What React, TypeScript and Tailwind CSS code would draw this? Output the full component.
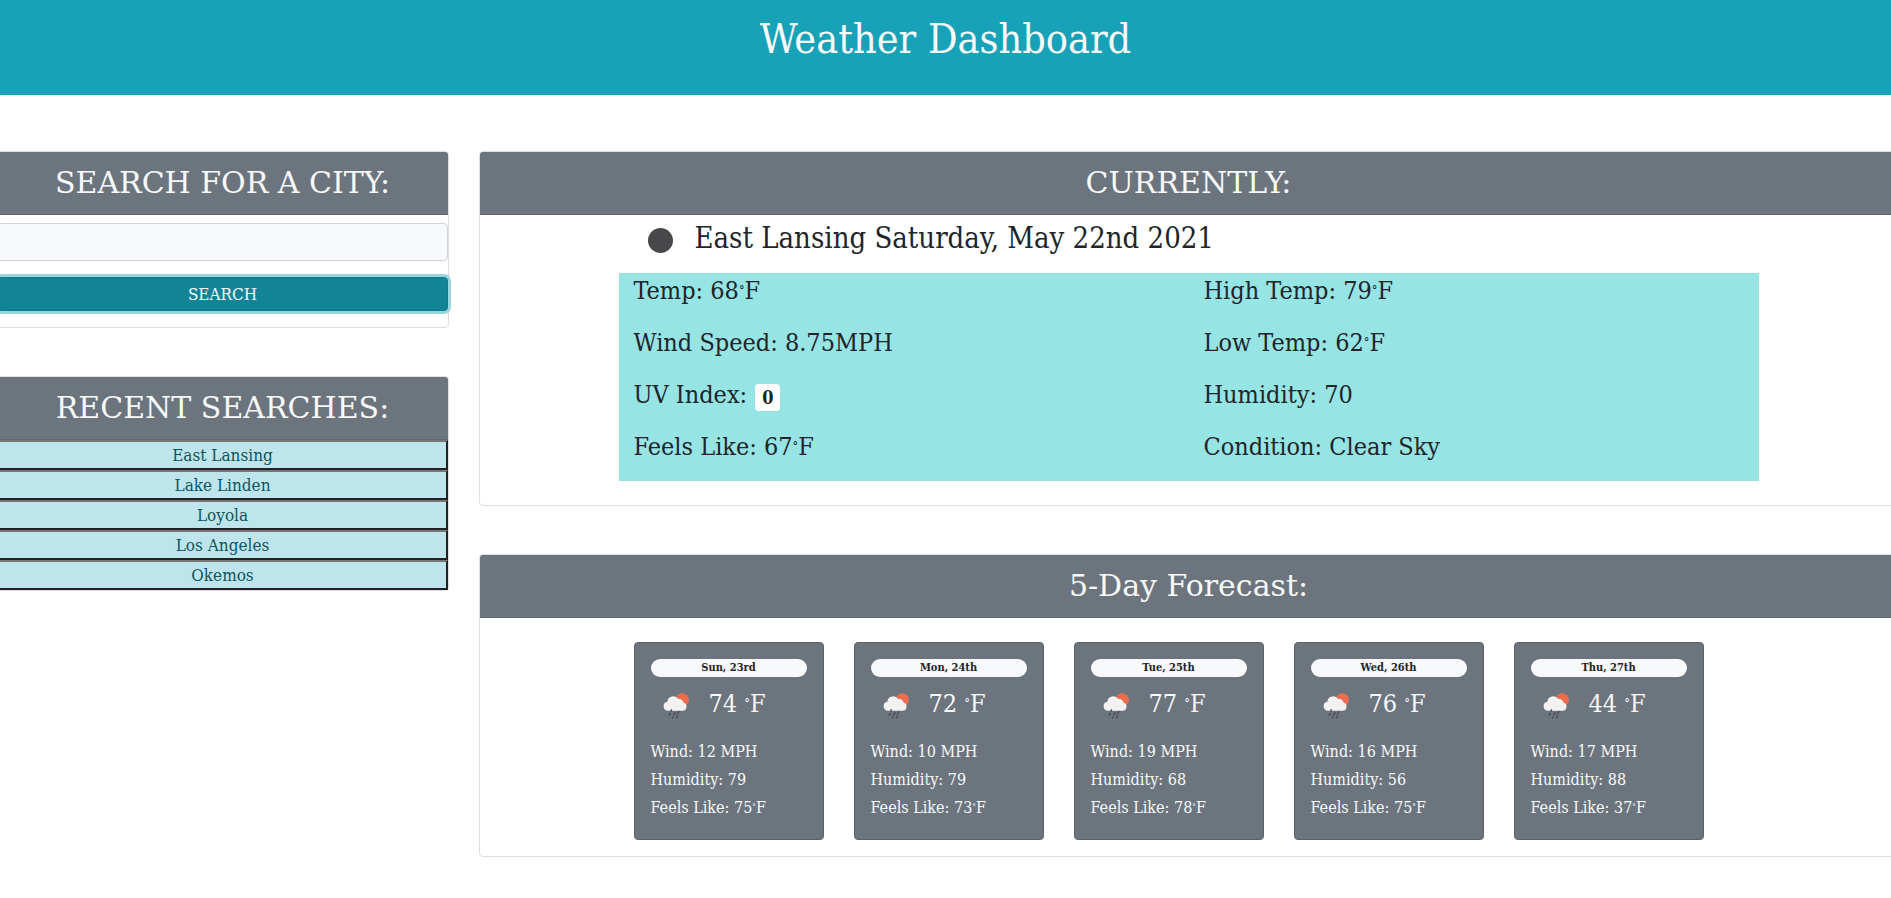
import type { ReactNode } from "react";

const recentSearches = ["East Lansing", "Lake Linden", "Loyola", "Los Angeles", "Okemos"];

const forecast = [
  { date: "Sun, 23rd", temp: 74, wind: 12, humidity: 79, feels: 75 },
  { date: "Mon, 24th", temp: 72, wind: 10, humidity: 79, feels: 73 },
  { date: "Tue, 25th", temp: 77, wind: 19, humidity: 68, feels: 78 },
  { date: "Wed, 26th", temp: 76, wind: 16, humidity: 56, feels: 75 },
  { date: "Thu, 27th", temp: 44, wind: 17, humidity: 88, feels: 37 },
];

function Degree() {
  return <span className="align-[4px] text-[50%] leading-none">°</span>;
}

function Panel({ title, children }: { title: string; children: ReactNode }) {
  return (
    <section className="rounded border border-[#dfdfdf] bg-white">
      <h2 className="rounded-t-[3px] border-b border-[#5f666e] bg-[#6c757d] py-3 text-center font-['DejaVu_Serif',serif] text-[30px] leading-[38px] text-[#f8f9fa]">
        {title}
      </h2>
      {children}
    </section>
  );
}

function RainIcon() {
  return (
    <svg viewBox="0 0 26 26" className="mt-1 size-[26px]" aria-hidden="true">
      <circle cx="19.4" cy="6.8" r="6.6" fill="#ec6e4c" />
      <path
        d="M5 17.8a4.600 4.600 0 0 1-.7-9.100a6 6 0 0 1 10.900-2.700a4.500 4.500 0 0 1 5.300 3.600a4.200 4.200 0 0 1-.7 8.200z"
        fill="#f2f2f2"
      />
      <path
        d="M8.300 16.800l-.4 1.300M15.900 18.600l-.4 1M7 20.600l-.7 1.500M11.900 19.600l-.9 2M14.500 21l-.3.7M10 24l-.4.9M14.200 23.600l-.5 1.200"
        stroke="#48484a"
        strokeWidth="1.400"
        strokeLinecap="round"
      />
    </svg>
  );
}

export default function App() {
  return (
    <div className="min-h-screen overflow-x-hidden bg-white font-['DejaVu_Serif_Condensed','DejaVu_Serif',serif] text-base text-[#212529]">
      <header className="bg-[#17a2b8] pt-[15px] pb-8 text-center">
        <h1 className="text-[41px] leading-[48px] text-[#f8f9fa]">Weather Dashboard</h1>
      </header>

      <main className="mt-14 -mr-[22px] -ml-[19px] grid grid-cols-[1fr_3fr] items-start">
        <aside className="flex flex-col gap-12 px-[15px]">
          <Panel title="SEARCH FOR A CITY:">
            <form className="flex flex-col gap-4 pt-2 pb-4" onSubmit={(e) => e.preventDefault()}>
              <input
                type="text"
                aria-label="City"
                className="h-[38px] w-full rounded border border-[#ced4da] bg-[#f8f9fa] px-3 outline-none"
              />
              <button
                type="submit"
                className="h-[34px] w-full rounded border border-[#117a8b] bg-[#138496] text-[17px] leading-8 text-[#f8f9fa] shadow-[0_0_0_3px_#9bd5de]"
              >
                SEARCH
              </button>
            </form>
          </Panel>

          <Panel title="RECENT SEARCHES:">
            <div className="flex flex-col">
              {recentSearches.map((city) => (
                <button
                  key={city}
                  type="button"
                  className="h-[30px] border-2 border-t-[#767676] border-r-[#212121] border-b-[#212121] border-l-[#767676] bg-[#bee5eb] text-[17px] leading-[26px] text-[#0c5460]"
                >
                  {city}
                </button>
              ))}
            </div>
          </Panel>
        </aside>

        <div className="flex flex-col gap-12 px-[15px]">
          <Panel title="CURRENTLY:">
            <div className="mx-auto max-w-[1140px] pb-6">
              <div className="flex h-[58px] items-start gap-[22px] pt-[5px] pl-[29px]">
                <svg viewBox="0 0 25 25" className="mt-2 size-[25px]" aria-hidden="true">
                  <circle cx="12.500" cy="12.500" r="12.500" fill="#48484a" />
                </svg>
                <h3 className="text-[29px] leading-9">East Lansing Saturday, May 22nd 2021</h3>
              </div>
              <div className="grid grid-flow-col grid-cols-2 grid-rows-4 bg-[#96e4e4] text-[25px] leading-9 *:h-[52px] *:px-[15px]">
                <p>Temp: 68<Degree />F</p>
                <p>Wind Speed: 8.75MPH</p>
                <p className="flex items-start gap-2">
                  UV Index:
                  <span className="mt-[7px] rounded bg-white px-[7px] text-[18px] leading-[27px] font-bold">0</span>
                </p>
                <p>Feels Like: 67<Degree />F</p>
                <p>High Temp: 79<Degree />F</p>
                <p>Low Temp: 62<Degree />F</p>
                <p>Humidity: 70</p>
                <p>Condition: Clear Sky</p>
              </div>
            </div>
          </Panel>

          <Panel title="5-Day Forecast:">
            <div className="mx-auto flex max-w-[1140px] gap-[30px] px-[15px] pt-6 pb-4">
              {forecast.map((day) => (
                <article
                  key={day.date}
                  className="w-[190px] rounded border border-[#5b636a] bg-[#6c757d] px-4 pt-4 pb-[17px] text-[#f8f9fa]"
                >
                  <h4 className="rounded-full bg-[#f8f9fa] text-center text-[11px] leading-[18px] font-bold text-[#212529]">
                    {day.date}
                  </h4>
                  <div className="mt-[9px] mb-4 flex h-9 items-center gap-5 pl-3">
                    <RainIcon />
                    <p className="text-[25px] leading-9">{day.temp} <Degree />F</p>
                  </div>
                  <div className="leading-7">
                    <p>Wind: {day.wind} MPH</p>
                    <p>Humidity: {day.humidity}</p>
                    <p>Feels Like: {day.feels}<Degree />F</p>
                  </div>
                </article>
              ))}
            </div>
          </Panel>
        </div>
      </main>
    </div>
  );
}
